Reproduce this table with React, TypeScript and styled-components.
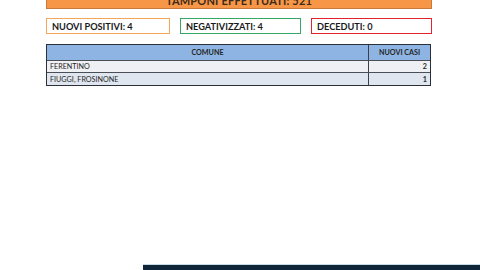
import React from "react";
import styled, { createGlobalStyle } from "styled-components";

const GlobalStyle = createGlobalStyle`
  html, body {
    margin: 0;
    padding: 0;
    background: #ffffff;
  }
  body {
    font-family: Lato, "Open Sans", "Liberation Sans", sans-serif;
  }
`;

const Page = styled.div`
  width: 480px;
  height: 270px;
  display: flex;
  flex-direction: column;
  overflow: hidden;
  background: #ffffff;
`;

const Content = styled.div`
  width: 386px;
  margin-left: 46px;
  display: flex;
  flex-direction: column;
`;

const Banner = styled.div`
  height: 9px;
  background: #f79646;
  border: 1px solid #c9793a;
  border-top: none;
  box-sizing: border-box;
  display: flex;
  justify-content: center;
  align-items: flex-end;
  overflow: hidden;
`;

const BannerText = styled.span`
  font-size: 11px;
  font-weight: 700;
  line-height: 11px;
  color: #3a2a1c;
  margin-bottom: 2px;
  letter-spacing: 0.2px;
`;

const StatRow = styled.div`
  display: flex;
  gap: 10px;
  margin-top: 9px;
`;

const StatBox = styled.div<{ $color: string; $width: number }>`
  width: ${(p) => p.$width}px;
  height: 16px;
  box-sizing: border-box;
  border: 1.5px solid ${(p) => p.$color};
  display: flex;
  align-items: center;
  padding-left: 5px;
  font-size: 9.2px;
  font-weight: 700;
  color: #1a1a1a;
`;

const Table = styled.div`
  margin-top: 10px;
  width: 385px;
  border: 1px solid #2a2f38;
  box-sizing: border-box;
  display: flex;
  flex-direction: column;
`;

const Row = styled.div<{ $bg: string; $height: number }>`
  display: grid;
  grid-template-columns: 322px 1fr;
  height: ${(p) => p.$height}px;
  background: ${(p) => p.$bg};
  border-bottom: 1px solid #4a4f57;
  box-sizing: border-box;
  &:last-child {
    border-bottom: none;
  }
`;

const Cell = styled.div<{ $align: string; $bold?: boolean }>`
  display: flex;
  align-items: center;
  justify-content: ${(p) => p.$align};
  padding: 0 3px;
  font-size: 7.2px;
  font-weight: ${(p) => (p.$bold ? 700 : 400)};
  color: #262626;
  &:first-child {
    border-right: 1px solid #3a3f48;
  }
`;

const Spacer = styled.div`
  flex: 1;
`;

const Footer = styled.div`
  height: 5px;
  margin-left: 143px;
  background: #0e2638;
  border-top: 1px solid #c9dbe6;
`;

const rows = [
  { comune: "FERENTINO", casi: 2, bg: "#eef0f4" },
  { comune: "FIUGGI, FROSINONE", casi: 1, bg: "#dfe6ef" },
];

export default function App() {
  return (
    <Page>
      <GlobalStyle />
      <Content>
        <Banner>
          <BannerText>TAMPONI EFFETTUATI: 521</BannerText>
        </Banner>
        <StatRow>
          <StatBox $color="#f4a55c" $width={124}>NUOVI POSITIVI: 4</StatBox>
          <StatBox $color="#35a865" $width={121}>NEGATIVIZZATI: 4</StatBox>
          <StatBox $color="#e3232c" $width={121}>DECEDUTI: 0</StatBox>
        </StatRow>
        <Table>
          <Row $bg="#8db4e2" $height={16}>
            <Cell $align="center" $bold>COMUNE</Cell>
            <Cell $align="center" $bold>NUOVI CASI</Cell>
          </Row>
          {rows.map((r) => (
            <Row key={r.comune} $bg={r.bg} $height={12}>
              <Cell $align="flex-start">{r.comune}</Cell>
              <Cell $align="flex-end" $bold>{r.casi}</Cell>
            </Row>
          ))}
        </Table>
      </Content>
      <Spacer />
      <Footer />
    </Page>
  );
}
